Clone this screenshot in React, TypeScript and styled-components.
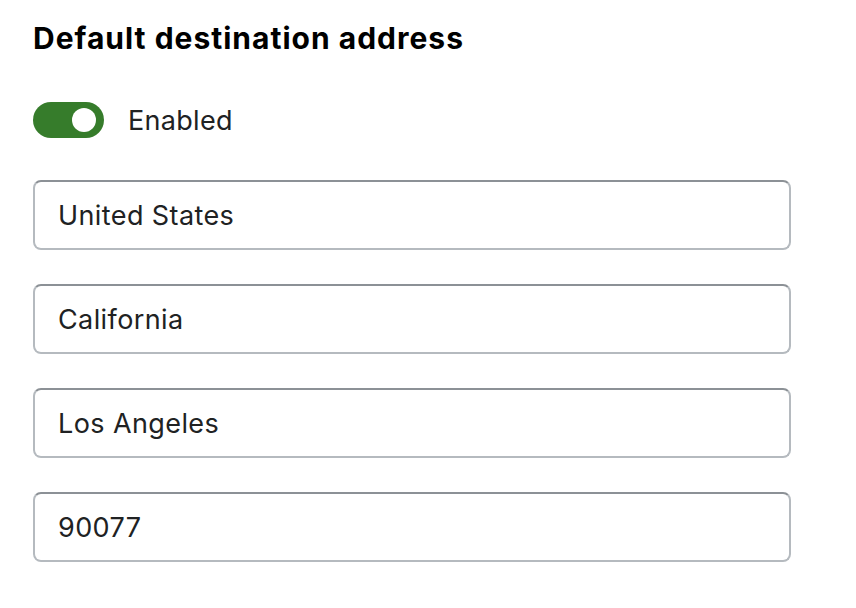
import React from "react";
import styled, { createGlobalStyle } from "styled-components";

const Global = createGlobalStyle`
  html, body { margin: 0; padding: 0; background: #ffffff; }
  body { font-family: Inter, "Noto Sans", sans-serif; color: #202223; }
`;

const Page = styled.div`
  padding: 18px 65px 0 33px;
  display: flex;
  flex-direction: column;
`;

const Title = styled.h2`
  margin: 0;
  font-size: 30px;
  line-height: 40px;
  font-weight: 700;
  color: #000;
  letter-spacing: 1px;
`;

const ToggleRow = styled.label`
  display: flex;
  align-items: center;
  gap: 24px;
  margin-top: 44px;
  margin-bottom: 42px;
`;

const Track = styled.span<{ $on: boolean }>`
  width: 71px;
  height: 36px;
  border-radius: 18px;
  background: ${(p) => (p.$on ? "#367c2b" : "#8c9196")};
  display: flex;
  align-items: center;
  justify-content: ${(p) => (p.$on ? "flex-end" : "flex-start")};
  padding: 0 8px;
  box-sizing: border-box;
`;

const Knob = styled.span`
  width: 24px;
  height: 24px;
  border-radius: 50%;
  background: #fff;
`;

const ToggleLabel = styled.span`
  font-size: 27px;
  letter-spacing: 0.3px;
  color: #202223;
`;

const Fields = styled.div`
  display: flex;
  flex-direction: column;
  gap: 34px;
`;

const Field = styled.input`
  width: 758px;
  height: 70px;
  box-sizing: border-box;
  border: 2px solid #b5babf;
  border-top-color: #8c9196;
  border-radius: 8px;
  padding: 0 23px;
  font-family: Inter, "Noto Sans", sans-serif;
  font-size: 27px;
  letter-spacing: 0.4px;
  color: #202223;
  background: #fff;
  outline: none;
`;

export default function App() {
  const values = ["United States", "California", "Los Angeles", "90077"];
  return (
    <>
      <Global />
      <Page>
        <Title>Default destination address</Title>
        <ToggleRow>
          <Track $on={true}>
            <Knob />
          </Track>
          <ToggleLabel>Enabled</ToggleLabel>
        </ToggleRow>
        <Fields>
          {values.map((v) => (
            <Field key={v} defaultValue={v} readOnly />
          ))}
        </Fields>
      </Page>
    </>
  );
}
